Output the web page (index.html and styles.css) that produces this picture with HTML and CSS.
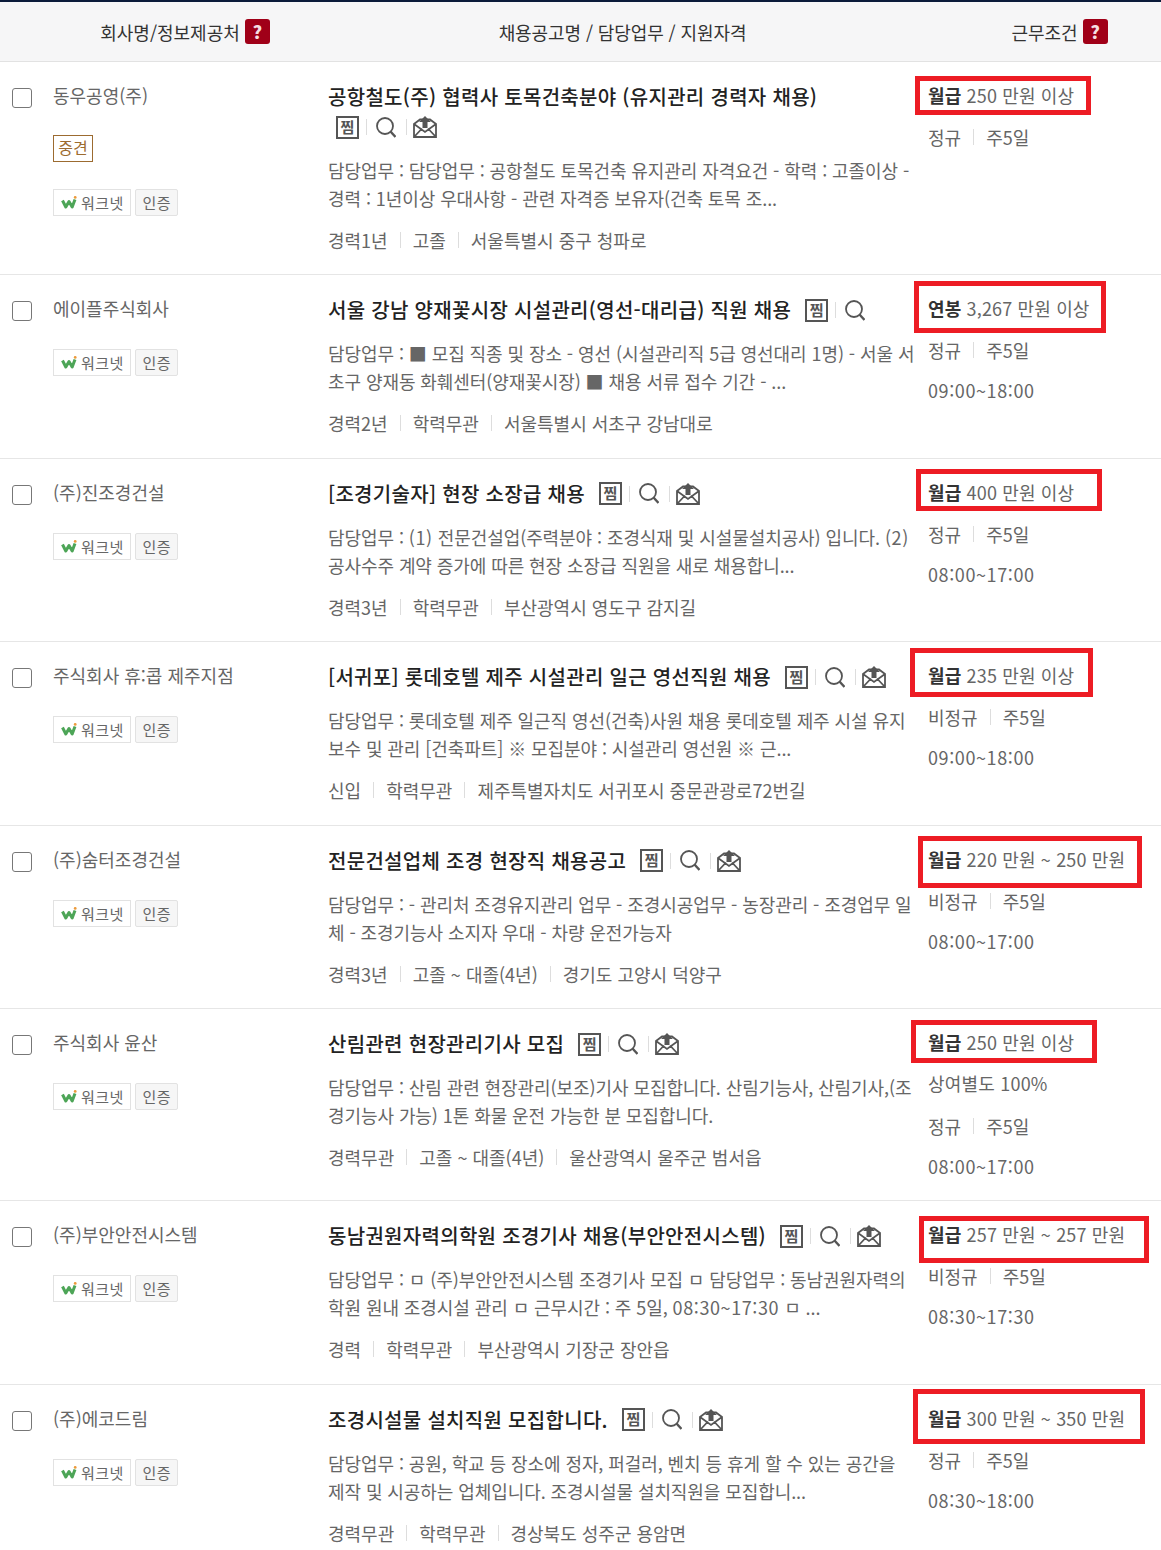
FILE: index.html
```html
<!DOCTYPE html>
<html lang="ko">
<head>
  <meta charset="UTF-8">
  <meta name="viewport" content="width=device-width, initial-scale=1.0">
  <title>채용공고 목록</title>
  <link rel="stylesheet" href="styles.css">
</head>
<body>
  <svg class="sprites" width="0" height="0">
    <symbol id="i-search" viewBox="0 0 20 21">
      <circle cx="9" cy="9" r="8" fill="none" stroke="currentColor" stroke-width="1.8"/>
      <path d="M14.5 14.5l5 5.5" fill="none" stroke="currentColor" stroke-width="2.4"/>
    </symbol>
    <symbol id="i-mail" viewBox="0 0 24 22">
      <path d="M1 8L7 3.5H17L23 8V21H1ZM1 8L12 16L23 8M1 21L9 12.5M23 21L15 12.5" fill="none" stroke="currentColor" stroke-width="1.8"/>
      <path d="M12 0L18 6H14.5V12H9.5V6H6Z" fill="currentColor"/>
    </symbol>
    <symbol id="i-wn" viewBox="0 0 16 13">
      <path d="M1.5 4.5L4.8 11L8 5.5L11.2 11L14 3.5" fill="none" stroke="#4da557" stroke-width="3" stroke-linejoin="round"/>
      <circle cx="14.2" cy="1.4" r="1.4" fill="#ec9a3c"/>
    </symbol>
  </svg>

  <div class="list-head">
    <div class="head-cell head-company">회사명/정보제공처 <span class="help">?</span></div>
    <div class="head-cell head-main">채용공고명 / 담당업무 / 지원자격</div>
    <div class="head-cell head-terms">근무조건 <span class="help">?</span></div>
  </div>

  <div class="job-row job-first">
    <input class="check" type="checkbox">
    <div class="company">
      <div class="company-name">동우공영(주)</div>
      <div class="size-tag">중견</div>
      <div class="tags"><span class="tag"><svg class="wn"><use href="#i-wn"/></svg>워크넷</span><span class="tag tag-gray">인증</span></div>
    </div>
    <div class="main">
      <h2 class="title">공항철도(주) 협력사 토목건축분야 (유지관리 경력자 채용)
        <span class="tools"><span class="save">찜</span><i class="sep"></i><svg class="search"><use href="#i-search"/></svg><i class="sep"></i><svg class="mail"><use href="#i-mail"/></svg></span>
      </h2>
      <p class="desc">담당업무 : 담당업무 : 공항철도 토목건축 유지관리 자격요건 - 학력 : 고졸이상 - 경력 : 1년이상 우대사항 - 관련 자격증 보유자(건축 토목 조...</p>
      <div class="meta"><span>경력1년</span><span>고졸</span><span>서울특별시 중구 청파로</span></div>
    </div>
    <div class="terms">
      <div class="salary"><b>월급</b> 250 만원 이상<i class="mark mark-1"></i></div>
      <div class="meta"><span>정규</span><span>주5일</span></div>
    </div>
  </div>

  <div class="job-row">
    <input class="check" type="checkbox">
    <div class="company">
      <div class="company-name">에이플주식회사</div>
      <div class="tags"><span class="tag"><svg class="wn"><use href="#i-wn"/></svg>워크넷</span><span class="tag tag-gray">인증</span></div>
    </div>
    <div class="main">
      <h2 class="title">서울 강남 양재꽃시장 시설관리(영선-대리급) 직원 채용
        <span class="tools"><span class="save">찜</span><i class="sep"></i><svg class="search"><use href="#i-search"/></svg></span>
      </h2>
      <p class="desc">담당업무 : ■ 모집 직종 및 장소 - 영선 (시설관리직 5급 영선대리 1명) - 서울 서초구 양재동 화훼센터(양재꽃시장) ■ 채용 서류 접수 기간 - ...</p>
      <div class="meta"><span>경력2년</span><span>학력무관</span><span>서울특별시 서초구 강남대로</span></div>
    </div>
    <div class="terms">
      <div class="salary"><b>연봉</b> 3,267 만원 이상<i class="mark mark-2"></i></div>
      <div class="meta"><span>정규</span><span>주5일</span></div>
      <div class="hours">09:00~18:00</div>
    </div>
  </div>

  <div class="job-row">
    <input class="check" type="checkbox">
    <div class="company">
      <div class="company-name">(주)진조경건설</div>
      <div class="tags"><span class="tag"><svg class="wn"><use href="#i-wn"/></svg>워크넷</span><span class="tag tag-gray">인증</span></div>
    </div>
    <div class="main">
      <h2 class="title">[조경기술자] 현장 소장급 채용
        <span class="tools"><span class="save">찜</span><i class="sep"></i><svg class="search"><use href="#i-search"/></svg><i class="sep"></i><svg class="mail"><use href="#i-mail"/></svg></span>
      </h2>
      <p class="desc">담당업무 : <span class="num">(1)</span> 전문건설업(주력분야 : 조경식재 및 시설물설치공사) 입니다. <span class="num">(2)</span> 공사수주 계약 증가에 따른 현장 소장급 직원을 새로 채용합니...</p>
      <div class="meta"><span>경력3년</span><span>학력무관</span><span>부산광역시 영도구 감지길</span></div>
    </div>
    <div class="terms">
      <div class="salary"><b>월급</b> 400 만원 이상<i class="mark mark-3"></i></div>
      <div class="meta"><span>정규</span><span>주5일</span></div>
      <div class="hours">08:00~17:00</div>
    </div>
  </div>

  <div class="job-row">
    <input class="check" type="checkbox">
    <div class="company">
      <div class="company-name">주식회사 휴:콥 제주지점</div>
      <div class="tags"><span class="tag"><svg class="wn"><use href="#i-wn"/></svg>워크넷</span><span class="tag tag-gray">인증</span></div>
    </div>
    <div class="main">
      <h2 class="title">[서귀포] 롯데호텔 제주 시설관리 일근 영선직원 채용
        <span class="tools"><span class="save">찜</span><i class="sep"></i><svg class="search"><use href="#i-search"/></svg><i class="sep"></i><svg class="mail"><use href="#i-mail"/></svg></span>
      </h2>
      <p class="desc">담당업무 : 롯데호텔 제주 일근직 영선(건축)사원 채용 롯데호텔 제주 시설 유지 보수 및 관리 [건축파트] ※ 모집분야 : 시설관리 영선원 ※ 근...</p>
      <div class="meta"><span>신입</span><span>학력무관</span><span>제주특별자치도 서귀포시 중문관광로72번길</span></div>
    </div>
    <div class="terms">
      <div class="salary"><b>월급</b> 235 만원 이상<i class="mark mark-4"></i></div>
      <div class="meta"><span>비정규</span><span>주5일</span></div>
      <div class="hours">09:00~18:00</div>
    </div>
  </div>

  <div class="job-row">
    <input class="check" type="checkbox">
    <div class="company">
      <div class="company-name">(주)숨터조경건설</div>
      <div class="tags"><span class="tag"><svg class="wn"><use href="#i-wn"/></svg>워크넷</span><span class="tag tag-gray">인증</span></div>
    </div>
    <div class="main">
      <h2 class="title">전문건설업체 조경 현장직 채용공고
        <span class="tools"><span class="save">찜</span><i class="sep"></i><svg class="search"><use href="#i-search"/></svg><i class="sep"></i><svg class="mail"><use href="#i-mail"/></svg></span>
      </h2>
      <p class="desc">담당업무 : - 관리처 조경유지관리 업무 - 조경시공업무 - 농장관리 - 조경업무 일체 - 조경기능사 소지자 우대 - 차량 운전가능자</p>
      <div class="meta"><span>경력3년</span><span>고졸 ~ 대졸(4년)</span><span>경기도 고양시 덕양구</span></div>
    </div>
    <div class="terms">
      <div class="salary"><b>월급</b> 220 만원 ~ 250 만원<i class="mark mark-5"></i></div>
      <div class="meta"><span>비정규</span><span>주5일</span></div>
      <div class="hours">08:00~17:00</div>
    </div>
  </div>

  <div class="job-row">
    <input class="check" type="checkbox">
    <div class="company">
      <div class="company-name">주식회사 윤산</div>
      <div class="tags"><span class="tag"><svg class="wn"><use href="#i-wn"/></svg>워크넷</span><span class="tag tag-gray">인증</span></div>
    </div>
    <div class="main">
      <h2 class="title">산림관련 현장관리기사 모집
        <span class="tools"><span class="save">찜</span><i class="sep"></i><svg class="search"><use href="#i-search"/></svg><i class="sep"></i><svg class="mail"><use href="#i-mail"/></svg></span>
      </h2>
      <p class="desc">담당업무 : 산림 관련 현장관리(보조)기사 모집합니다. 산림기능사, 산림기사,(조경기능사 가능) 1톤 화물 운전 가능한 분 모집합니다.</p>
      <div class="meta"><span>경력무관</span><span>고졸 ~ 대졸(4년)</span><span>울산광역시 울주군 범서읍</span></div>
    </div>
    <div class="terms">
      <div class="salary"><b>월급</b> 250 만원 이상<i class="mark mark-6"></i></div>
      <div class="bonus">상여별도 100%</div>
      <div class="meta"><span>정규</span><span>주5일</span></div>
      <div class="hours">08:00~17:00</div>
    </div>
  </div>

  <div class="job-row">
    <input class="check" type="checkbox">
    <div class="company">
      <div class="company-name">(주)부안안전시스템</div>
      <div class="tags"><span class="tag"><svg class="wn"><use href="#i-wn"/></svg>워크넷</span><span class="tag tag-gray">인증</span></div>
    </div>
    <div class="main">
      <h2 class="title">동남권원자력의학원 조경기사 채용(부안안전시스템)
        <span class="tools"><span class="save">찜</span><i class="sep"></i><svg class="search"><use href="#i-search"/></svg><i class="sep"></i><svg class="mail"><use href="#i-mail"/></svg></span>
      </h2>
      <p class="desc">담당업무 : ㅁ (주)부안안전시스템 조경기사 모집 ㅁ 담당업무 : 동남권원자력의학원 원내 조경시설 관리 ㅁ 근무시간 : 주 5일, <span class="num">08:30~17:30</span> ㅁ ...</p>
      <div class="meta"><span>경력</span><span>학력무관</span><span>부산광역시 기장군 장안읍</span></div>
    </div>
    <div class="terms">
      <div class="salary"><b>월급</b> 257 만원 ~ 257 만원<i class="mark mark-7"></i></div>
      <div class="meta"><span>비정규</span><span>주5일</span></div>
      <div class="hours">08:30~17:30</div>
    </div>
  </div>

  <div class="job-row">
    <input class="check" type="checkbox">
    <div class="company">
      <div class="company-name">(주)에코드림</div>
      <div class="tags"><span class="tag"><svg class="wn"><use href="#i-wn"/></svg>워크넷</span><span class="tag tag-gray">인증</span></div>
    </div>
    <div class="main">
      <h2 class="title">조경시설물 설치직원 모집합니다.
        <span class="tools"><span class="save">찜</span><i class="sep"></i><svg class="search"><use href="#i-search"/></svg><i class="sep"></i><svg class="mail"><use href="#i-mail"/></svg></span>
      </h2>
      <p class="desc">담당업무 : 공원, 학교 등 장소에 정자, 퍼걸러, 벤치 등 휴게 할 수 있는 공간을 제작 및 시공하는 업체입니다. 조경시설물 설치직원을 모집합니...</p>
      <div class="meta"><span>경력무관</span><span>학력무관</span><span>경상북도 성주군 용암면</span></div>
    </div>
    <div class="terms">
      <div class="salary"><b>월급</b> 300 만원 ~ 350 만원<i class="mark mark-8"></i></div>
      <div class="meta"><span>정규</span><span>주5일</span></div>
      <div class="hours">08:30~18:00</div>
    </div>
  </div>
</body>
</html>
```

FILE: styles.css
```css
html, body {
  height: 1550px;
  overflow: hidden;
}

body {
  margin: 0;
  background: #fff;
  color: #666;
  font-family: "Noto Sans CJK KR", "Noto Sans", sans-serif;
  font-size: 18px;
  line-height: 28px;
}

.sprites {
  position: absolute;
}

.list-head {
  display: grid;
  grid-template-columns: 41px 288px 587px 245px;
  grid-template-areas: ". company main terms";
  align-items: center;
  height: 59px;
  background: #f6f6f7;
  border-top: 2px solid #0b1b3a;
  border-bottom: 1px solid #e2e2e2;
  color: #333;
}

.head-cell {
  display: flex;
  align-items: center;
  justify-content: center;
  gap: 5px;
}

.head-company { grid-area: company; }
.head-main { grid-area: main; letter-spacing: -0.1px; }
.head-terms { grid-area: terms; padding-left: 42px; }

.help {
  width: 25px;
  height: 25px;
  border-radius: 3px;
  background: #a00018;
  color: #f6dfe2;
  font-size: 18px;
  font-weight: 900;
  line-height: 25px;
  text-align: center;
}

.job-row {
  display: grid;
  grid-template-columns: 53px 275px 600px 1fr;
  padding: 20px 0 20.6px;
  border-bottom: 1px solid #e6e6e6;
}

.job-first {
  padding-bottom: 20px;
}

.check {
  appearance: none;
  width: 20px;
  height: 20px;
  margin: 6px 0 0 12px;
  border: 1px solid #777;
  border-radius: 3px;
  background: #fff;
}

.company,
.terms {
  margin-top: -1px;
}

.size-tag {
  width: 38px;
  height: 25px;
  margin-top: 26px;
  border: 1px solid #9c6b30;
  color: #9c6b30;
  font-size: 16px;
  line-height: 23px;
  text-align: center;
}

.tags {
  display: flex;
  gap: 4px;
  margin-top: 27px;
}

.tag {
  display: flex;
  align-items: center;
  height: 25px;
  padding: 0 6px 0 7px;
  border: 1px solid #e2e2e2;
  font-size: 15px;
  letter-spacing: 0.4px;
  line-height: 25px;
}

.tag-gray {
  background: #f6f6f6;
  border-radius: 2px;
}

.wn {
  width: 16px;
  height: 13px;
  margin-right: 4px;
}

.main {
  padding-right: 12px;
}

.title {
  margin: 0;
  color: #222;
  font-size: 20px;
  font-weight: 500;
  letter-spacing: 0.3px;
  line-height: 30px;
}

.tools {
  display: inline-flex;
  align-items: center;
  height: 30px;
  margin-left: 8px;
  vertical-align: top;
  color: #555;
  letter-spacing: 0;
}

.save {
  width: 19px;
  height: 19px;
  margin-right: 7px;
  border: 2px solid #555;
  font-size: 15px;
  font-weight: 700;
  line-height: 18px;
  text-align: center;
}

.sep {
  width: 1px;
  height: 16px;
  margin-right: 9px;
  background: #ddd;
}

.search {
  width: 20px;
  height: 21px;
  margin-right: 10px;
}

.search + .sep {
  margin-right: 6px;
}

.mail {
  width: 24px;
  height: 22px;
}

.desc {
  margin: 14px 0;
  letter-spacing: -0.08px;
}

.num {
  letter-spacing: 0.6px;
}

.meta {
  display: flex;
}

.meta span + span {
  margin-left: 12px;
  padding-left: 13px;
  background: linear-gradient(#ddd, #ddd) left center / 1px 16px no-repeat;
}

.salary {
  position: relative;
  margin-bottom: 14px;
  letter-spacing: 0.15px;
  white-space: nowrap;
}

.salary b {
  color: #333;
  font-weight: 700;
}

.bonus {
  margin-bottom: 15.4px;
  letter-spacing: 0.2px;
  line-height: 26px;
}

.hours {
  margin-top: 12px;
  letter-spacing: 0.6px;
}

.mark {
  position: absolute;
  box-sizing: border-box;
  border: 5px solid #ed1c24;
}

.mark-1 { top: -5px; left: -13px; width: 176px; height: 39px; }
.mark-2 { top: -13px; left: -14px; width: 192px; height: 52px; }
.mark-3 { top: -9px; left: -12px; width: 186px; height: 42px; }
.mark-4 { top: -13px; left: -18px; width: 183px; height: 49px; }
.mark-5 { top: -9px; left: -10px; width: 224px; height: 52px; }
.mark-6 { top: -8px; left: -17px; width: 186px; height: 43px; }
.mark-7 { top: -4px; left: -9px; width: 230px; height: 47px; }
.mark-8 { top: -15px; left: -15px; width: 232px; height: 55px; }
```
